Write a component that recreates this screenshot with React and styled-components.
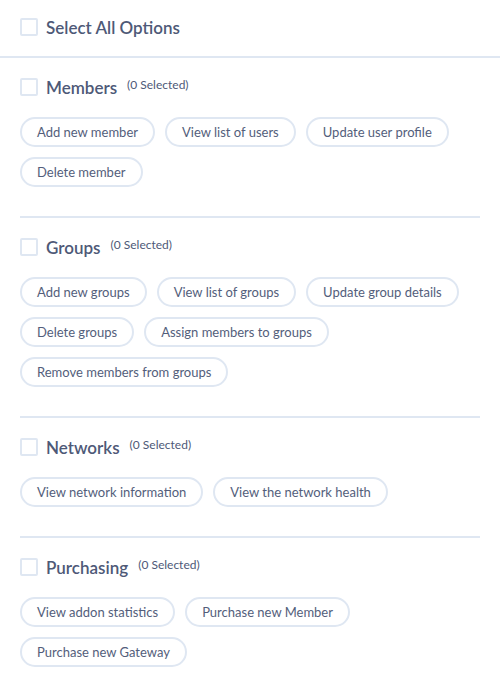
import React from 'react'
import styled, { createGlobalStyle } from 'styled-components'

const GlobalStyle = createGlobalStyle`
	body {
		margin: 0;
		background: #ffffff;
		font-family: Lato, 'Open Sans', sans-serif;
		color: #4b5675;
	}
`

const Page = styled.div`
	width: 500px;
`

const SelectAllRow = styled.label`
	display: flex;
	align-items: center;
	gap: 8px;
	height: 58px;
	padding: 0 20px 2px;
	border-bottom: 2px solid #dfe7f2;
	box-sizing: border-box;
`

const Box = styled.span`
	display: inline-block;
	width: 18px;
	height: 18px;
	box-sizing: border-box;
	border: 2px solid #dfe7f2;
	border-radius: 2px;
	flex-shrink: 0;
`

const Title = styled.span`
	font-size: 17px;
	font-weight: 600;
	color: #4e5977;
`

const Section = styled.section`
	margin: 0 20px;
	padding: 20px 0 29px;
	border-bottom: ${(props) => (props.last ? 'none' : '2px solid #dfe7f2')};
`

const Header = styled.div`
	display: flex;
	align-items: center;
	gap: 8px;
	height: 18px;
`

const Count = styled.span`
	font-size: 12px;
	color: #4e5977;
	margin-left: 2px;
	position: relative;
	top: -3px;
`

const Chips = styled.div`
	display: flex;
	flex-wrap: wrap;
	gap: 10px;
	margin-top: 21px;
`

const Chip = styled.button`
	height: 30px;
	padding: 0 15px;
	border: 2px solid #dfe7f2;
	border-radius: 15px;
	background: #ffffff;
	font-family: Lato, 'Open Sans', sans-serif;
	font-size: 13px;
	color: #535e7b;
	cursor: pointer;
`

const sections = [
	{
		title: 'Members',
		options: ['Add new member', 'View list of users', 'Update user profile', 'Delete member'],
	},
	{
		title: 'Groups',
		options: [
			'Add new groups',
			'View list of groups',
			'Update group details',
			'Delete groups',
			'Assign members to groups',
			'Remove members from groups',
		],
	},
	{
		title: 'Networks',
		options: ['View network information', 'View the network health'],
	},
	{
		title: 'Purchasing',
		options: ['View addon statistics', 'Purchase new Member', 'Purchase new Gateway'],
	},
]

export default function App() {
	return (
		<Page>
			<GlobalStyle />
			<SelectAllRow>
				<Box />
				<Title>Select All Options</Title>
			</SelectAllRow>
			{sections.map((section, i) => (
				<Section key={section.title} last={i === sections.length - 1}>
					<Header>
						<Box />
						<Title>{section.title}</Title>
						<Count>(0 Selected)</Count>
					</Header>
					<Chips>
						{section.options.map((option) => (
							<Chip key={option}>{option}</Chip>
						))}
					</Chips>
				</Section>
			))}
		</Page>
	)
}
